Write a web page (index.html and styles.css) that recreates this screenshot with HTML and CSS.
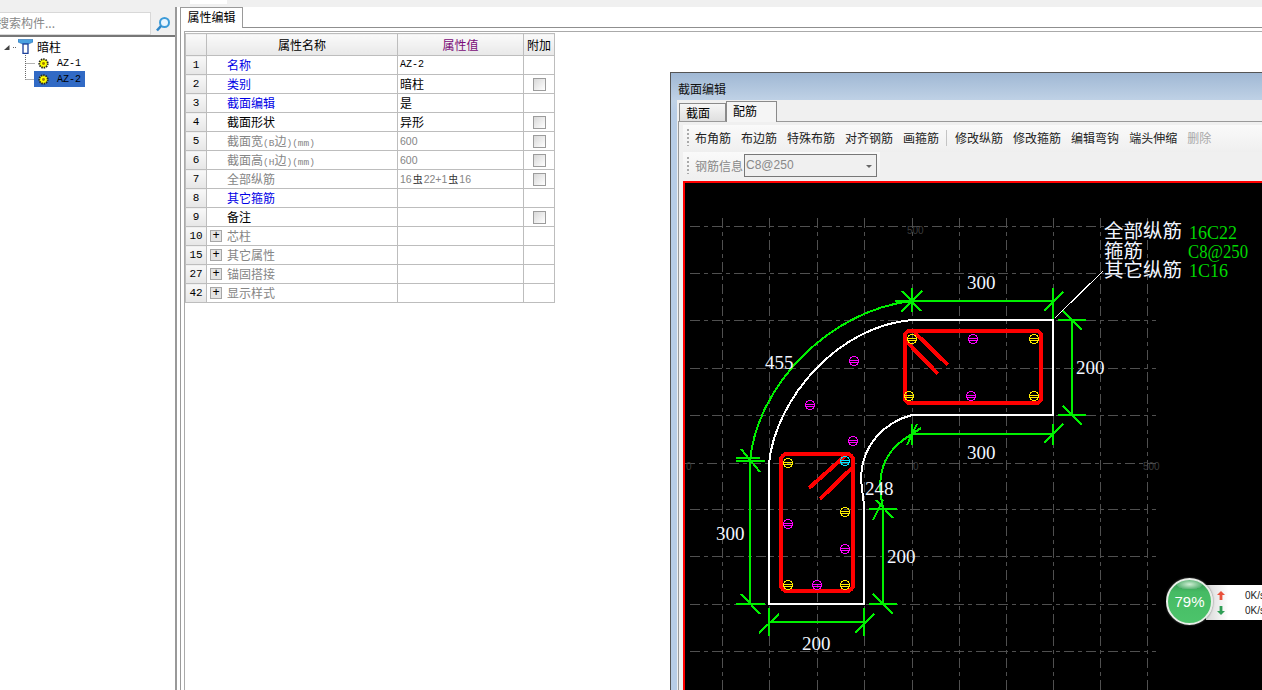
FILE: index.html
```html
<!DOCTYPE html>
<html lang="zh">
<head>
<meta charset="utf-8">
<title>属性编辑</title>
<link rel="stylesheet" href="styles.css">
</head>
<body>
<div class="topstrip"><span class="topwhite"></span></div>
<div class="main">
  <aside class="left">
    <div class="searchrow">
      <div class="searchbox">搜索构件...</div>
      <svg class="searchicon" width="16" height="16" viewBox="0 0 16 16"><circle cx="9.5" cy="6.5" r="4.5" fill="#eaf6ff" stroke="#3d9bd8" stroke-width="2"/><path d="M6 10 L2 14.5" stroke="#2f86c8" stroke-width="2.6"/></svg>
    </div>
    <div class="tree">
      <svg class="treelines" width="60" height="50" viewBox="0 0 60 50"><path d="M4 13 L9.5 13 L9.5 8 Z" fill="#444"/><path d="M13 10.5 H17 M25.5 18 V42.5 M25.5 26.5 H35 M25.5 42.5 H35" stroke="#666" stroke-dasharray="1 1" fill="none"/></svg>
      <div class="node root">
        <svg width="15" height="15" viewBox="0 0 15 15"><path d="M0 .5 H15 V3 L10.5 5 H4.5 L0 3 Z" fill="#4aa0e0" stroke="#2a6fb0" stroke-width=".6"/><rect x="5" y="5" width="5" height="9.4" fill="#fff" stroke="#1c3f9a" stroke-width="1.3"/></svg>
        <span>暗柱</span>
      </div>
      <div class="node leaf">
        <svg class="gear" width="11" height="11" viewBox="0 0 12 12"><circle cx="6" cy="6" r="4.6" fill="#ff0" stroke="#222" stroke-width="2" stroke-dasharray="1.6 1"/><circle cx="6" cy="6" r="1.6" fill="#a07c00"/></svg>
        <span class="mono">AZ-1</span>
      </div>
      <div class="node leaf sel">
        <svg class="gear" width="11" height="11" viewBox="0 0 12 12"><circle cx="6" cy="6" r="4.6" fill="#ff0" stroke="#222" stroke-width="2" stroke-dasharray="1.6 1"/><circle cx="6" cy="6" r="1.6" fill="#a07c00"/></svg>
        <span class="mono">AZ-2</span>
      </div>
    </div>
  </aside>
  <section class="right">
    <div class="tabbar"><div class="tab">属性编辑</div></div>
    <div class="tabpage">
      <div class="inner">
      <table class="props">
        <colgroup><col class="c0"><col class="c1"><col class="c2"><col class="c3"></colgroup>
        <tr class="head"><th></th><th>属性名称</th><th class="hot">属性值</th><th>附加</th></tr>
        <tr><td class="n">1</td><td class="name blue">名称</td><td class="val mono">AZ-2</td><td></td></tr>
        <tr><td class="n">2</td><td class="name blue">类别</td><td class="val">暗柱</td><td class="chk"><i></i></td></tr>
        <tr><td class="n">3</td><td class="name blue">截面编辑</td><td class="val">是</td><td></td></tr>
        <tr><td class="n">4</td><td class="name">截面形状</td><td class="val">异形</td><td class="chk"><i></i></td></tr>
        <tr><td class="n">5</td><td class="name gray">截面宽<span class="lat">(B</span>边<span class="lat">)(mm)</span></td><td class="val gray small">600</td><td class="chk"><i></i></td></tr>
        <tr><td class="n">6</td><td class="name gray">截面高<span class="lat">(H</span>边<span class="lat">)(mm)</span></td><td class="val gray small">600</td><td class="chk"><i></i></td></tr>
        <tr><td class="n">7</td><td class="name gray">全部纵筋</td><td class="val gray small">16<b>虫</b>22+1<b>虫</b>16</td><td class="chk"><i></i></td></tr>
        <tr><td class="n">8</td><td class="name blue">其它箍筋</td><td></td><td></td></tr>
        <tr><td class="n">9</td><td class="name">备注</td><td></td><td class="chk"><i></i></td></tr>
        <tr><td class="n">10</td><td class="group"><i>+</i>芯柱</td><td></td><td></td></tr>
        <tr><td class="n">15</td><td class="group"><i>+</i>其它属性</td><td></td><td></td></tr>
        <tr><td class="n">27</td><td class="group"><i>+</i>锚固搭接</td><td></td><td></td></tr>
        <tr><td class="n">42</td><td class="group"><i>+</i>显示样式</td><td></td><td></td></tr>
      </table>
      </div>
    </div>
  </section>
</div>

<div class="dialog">
  <div class="dtitle">截面编辑</div>
  <div class="dbody">
    <div class="dtabs"><div class="dtab">截面</div><div class="dtab on">配筋</div></div>
    <div class="dpage">
      <div class="toolbar">
        <span class="grip"></span>
        <span class="tb">布角筋</span><span class="tb">布边筋</span><span class="tb">特殊布筋</span><span class="tb">对齐钢筋</span><span class="tb">画箍筋</span>
        <span class="sep"></span>
        <span class="tb">修改纵筋</span><span class="tb">修改箍筋</span><span class="tb">编辑弯钩</span><span class="tb">端头伸缩</span><span class="tb off">删除</span>
      </div>
      <div class="toolbar two">
        <span class="grip"></span>
        <span class="lbl">钢筋信息</span>
        <span class="combo">C8@250<em></em></span>
      </div>
      <div class="canvas">
        <svg class="cad" width="577" height="507" viewBox="685 183 577 507">
          <defs>
            <symbol id="bar" viewBox="-5 -5 10 10" width="10" height="10" overflow="visible">
              <circle r="4.5" fill="none" stroke="currentColor" stroke-width="1.1"/>
              <path d="M-4 -1 H4 M-4 1 H4" stroke="currentColor" stroke-width="1"/>
            </symbol>
          </defs>
          <g class="grid">
            <path d="M722 218 V691 M769.5 218 V691 M817 218 V691 M864.5 218 V691 M912 218 V691 M959 218 V691 M1006 218 V691 M1053 218 V691 M1100 218 V691 M1147 218 V691"/>
            <path d="M690 226 H1156 M690 273 H1156 M690 320 H1156 M690 368 H1156 M690 415 H1156 M685 463 H1156 M690 509 H1156 M690 556 H1156 M690 604 H1156 M690 651 H1156"/>
          </g>
          <g class="axis">
            <text x="907" y="234">500</text><text x="686" y="470">0</text><text x="913" y="470">0</text><text x="1143" y="470">500</text>
          </g>

          <g class="outline">
            <path d="M912 320 H1053 V415 H912 C885 422 861 445 861 480 L864 505 V604 H769 V463 C776 398 838 326 912 320 Z"/>
          </g>

          <g class="dim">
            <path d="M750 461 C757 385 830 310 912 301"/>
            <path d="M883 507 C876 480 880 450 915 433"/>
            <path d="M912 301 H1053 M1053 288 V319 M1044 311 L1063 292 M912 288 V312 M901 312 L922 291 M902 291 L921 311 M895 301 H922"/>
            <path d="M1072 320 V415 M1058 320 H1086 M1063 311 L1082 330 M1058 415 H1086 M1063 406 L1082 425"/>
            <path d="M912 434 H1053 M1053 424 V445 M1044 443 L1063 424 M912 424 V445 M907 445 L917 424 M903 440 L921 428"/>
            <path d="M750 461 V604 M736 461 H765 M741 449 L760 472 M736 604 H765 M741 594 L760 614 M736 458 H760"/>
            <path d="M769 622 H864 M769 608 V636 M759 633 L779 614 M864 608 V636 M855 633 L874 614"/>
            <path d="M883 509 V604 M869 509 H897 M876 500 L893 518 M873 520 L883 500 M869 604 H897 M873 594 L893 614"/>
          </g>

          <g class="stir">
            <rect x="905" y="331" width="136" height="72" rx="5"/>
            <path d="M915 333 L948 365 M907 342 L938 374"/>
            <rect x="781" y="454" width="72" height="137" rx="6"/>
            <path d="M809 488 L845 456 M820 499 L852 468"/>
          </g>

          <use href="#bar" class="y" x="907" y="334"/>
          <use href="#bar" class="y" x="1029" y="334"/>
          <use href="#bar" class="y" x="904" y="391"/>
          <use href="#bar" class="y" x="1029" y="391"/>
          <use href="#bar" class="m" x="968" y="334"/>
          <use href="#bar" class="m" x="966" y="391"/>
          <use href="#bar" class="m" x="849" y="356"/>
          <use href="#bar" class="m" x="805" y="400"/>
          <use href="#bar" class="m" x="848" y="436"/>
          <use href="#bar" class="y" x="783" y="458"/>
          <use href="#bar" class="c" x="840" y="456"/>
          <use href="#bar" class="y" x="840" y="507"/>
          <use href="#bar" class="m" x="783" y="519"/>
          <use href="#bar" class="m" x="840" y="544"/>
          <use href="#bar" class="y" x="783" y="580"/>
          <use href="#bar" class="m" x="812" y="580"/>
          <use href="#bar" class="y" x="840" y="580"/>

          <path class="leader" d="M1055 318 L1103 271"/>
          <g class="cadtext">
            <text x="1104" y="238">全部纵筋</text>
            <text x="1104" y="258">箍筋</text>
            <text x="1104" y="277">其它纵筋</text>
          </g>
          <g class="cadnum">
            <text x="967" y="289">300</text>
            <text x="1076" y="374">200</text>
            <text x="967" y="459">300</text>
            <text x="765" y="369">455</text>
            <text x="865" y="495">248</text>
            <text x="716" y="540">300</text>
            <text x="887" y="563">200</text>
            <text x="802" y="650">200</text>
          </g>
          <g class="cadgreen">
            <text x="1189" y="239" textLength="48" lengthAdjust="spacingAndGlyphs">16C22</text>
            <text x="1188" y="258" textLength="60" lengthAdjust="spacingAndGlyphs">C8@250</text>
            <text x="1189" y="277" textLength="39" lengthAdjust="spacingAndGlyphs">1C16</text>
          </g>
        </svg>
      </div>
    </div>
  </div>
</div>

<div class="speed">
  <div class="panel">
    <div class="rate"><svg width="8" height="9" viewBox="0 0 8 9"><path d="M4 0 L8 4 H5.4 V9 H2.6 V4 H0 Z" fill="#e8503a"/></svg><span>0K/s</span></div>
    <div class="rate"><svg width="8" height="9" viewBox="0 0 8 9"><path d="M4 9 L8 5 H5.4 V0 H2.6 V5 H0 Z" fill="#2f9e55"/></svg><span>0K/s</span></div>
  </div>
  <div class="ball">79%</div>
</div>
</body>
</html>
```
FILE: styles.css
```css
* { box-sizing: border-box; }
html, body { margin: 0; height: 690px; overflow: hidden; }
body { background: #fff; font-family: "Noto Sans CJK SC", "Liberation Sans", sans-serif; font-size: 12px; color: #000; position: relative; }
.topstrip { height: 7px; background: #f0f0f0; }
.topwhite { display: block; width: 37px; height: 4px; margin-left: 190px; background: #fff; }
.main { display: flex; height: 683px; }
.left { width: 177px; border-right: 2px solid #999; flex: none; display: flex; flex-direction: column; background: #fff; }
.searchrow { height: 30px; display: flex; align-items: flex-end; background: #f0f0f0; border-bottom: 2px solid #777; flex: none; }
.searchbox { width: 152px; height: 23px; margin-left: -1px; background: #fff; border: 1px solid #d8d8d8; color: #888; font-size: 12px; line-height: 20px; overflow: hidden; text-indent: -3px; white-space: nowrap; }
.searchicon { margin: 0 0 3px 4px; }
.tree { position: relative; padding: 0 0 0 18px; flex: 1; }
.treelines { position: absolute; left: 0; top: 0; }
.node { height: 16px; display: flex; align-items: center; gap: 4px; position: relative; }
.root { height: 18px; font-size: 12px; }
.leaf { margin-left: 16px; width: 51px; padding-left: 4px; gap: 8px; }
.leaf.sel { background: #316ac5; }
.mono { font-family: "Liberation Mono", monospace; font-size: 10px; }
.gear { flex: none; }
.right { flex: 1; display: flex; flex-direction: column; min-width: 0; padding-left: 3px; background: #fff; }
.tabbar { height: 20px; display: flex; flex: none; }
.tab { width: 63px; height: 21px; background: #fff; border: 1px solid #9a9a9a; border-bottom: 0; text-align: center; line-height: 18px; font-size: 12px; position: relative; z-index: 1; }
.tabpage { flex: 1; border-top: 1px solid #8f8f8f; border-left: 1px solid #9a9a9a; padding: 3px 0 0 3px; display: flex; min-height: 0; }
.inner { flex: 1; border-top: 1px solid #aaa; border-left: 1px solid #aaa; padding-top: 1px; }
.props { border-collapse: collapse; table-layout: fixed; width: 369px; }
.c0 { width: 21px; } .c1 { width: 191px; } .c2 { width: 126px; } .c3 { width: 31px; }
.props th, .props td { border: 1px solid #bdbdbd; padding: 0; height: 19px; font-weight: 400; font-size: 12px; line-height: 16px; white-space: nowrap; overflow: hidden; }
.props tr.head th { height: 22px; background: linear-gradient(#fafafa, #e8e8e8); }
.props th.hot { background: linear-gradient(#fbdfa2, #f3c063); color: #7a0a78; }
.props td.n { background: linear-gradient(#f8f8f8, #e6e6e6); text-align: center; font-family: "Liberation Mono", monospace; font-size: 11px; }
.props td.mono { font-size: 10px; }
.props td.name { padding-left: 20px; }
.blue { color: #0000e6; }
.gray { color: #858585; }
.lat { font-family: "Liberation Mono", monospace; font-size: 9.5px; line-height: 1; }
.props td.val { padding-left: 2px; }
.props td.small { font-family: "Liberation Sans", sans-serif; font-size: 10.5px; }
.small b { font-family: "Noto Sans CJK SC", sans-serif; font-weight: 400; color: #333; font-size: 10px; line-height: 1; padding: 0 1px; }
.chk { text-align: center; }
.chk i { display: block; width: 13px; height: 13px; margin: 0 auto; border: 1px solid #9c9c9c; background: linear-gradient(135deg, #d8d8d8, #fff); }
.props td.group { color: #858585; }
.group i { display: inline-block; width: 12px; height: 12px; margin: 2px 5px 0 3px; border: 1px solid #a6a6a6; background: #e4e4e4; color: #000; font-style: normal; font-family: "Liberation Mono", monospace; font-size: 12px; line-height: 10px; text-align: center; vertical-align: top; }

.dialog { position: absolute; left: 670px; top: 72px; width: 592px; height: 618px; border: 1px solid #555; border-right: 0; border-bottom: 0; background: linear-gradient(180deg, #a0b8d4 0, #c0d2e6 28px, #b8cde6 40px); display: flex; flex-direction: column; }
.dtitle { height: 27px; padding: 6px 0 0 7px; line-height: 19px; font-size: 12px; color: #111; flex: none; }
.dbody { flex: 1; margin-left: 6px; display: flex; flex-direction: column; background: #f0f0f0; min-height: 0; }
.dtabs { height: 21px; display: flex; padding-left: 2px; align-items: flex-end; flex: none; }
.dtab { width: 47px; height: 18px; border: 1px solid #8a8a8a; border-bottom: 0; background: linear-gradient(#f6f6f6, #dfdfdf); line-height: 18px; padding-left: 6px; font-size: 12px; }
.dtab.on { width: 51px; height: 21px; background: #f5f5f5; margin-bottom: -1px; position: relative; line-height: 17px; }
.dpage { flex: 1; min-height: 0; border-top: 1px solid #9a9a9a; border-left: 1px solid #9a9a9a; margin-left: 1px; padding: 3px 0 0 4px; display: flex; flex-direction: column; }
.toolbar { height: 27px; display: flex; align-items: center; flex: none; background: linear-gradient(#fafafa, #efefef); padding: 0 0 2px 2px; white-space: nowrap; }
.toolbar.two { width: 197px; padding-bottom: 0; }
.grip { width: 2px; height: 17px; margin: 0 6px 0 2px; background: repeating-linear-gradient(#aaa 0 2px, transparent 2px 4px); flex: none; }
.tb { margin-right: 10px; line-height: 16px; color: #222; font-size: 12px; flex: none; }
.tb.off { color: #a8a8a8; }
.sep { width: 1px; height: 16px; background: #c4c4c4; margin: 0 8px 0 -3px; flex: none; }
.lbl { color: #888; flex: none; }
.combo { flex: none; width: 133px; height: 23px; margin-left: 1px; border: 1px solid #777; color: #888; line-height: 21px; padding-left: 1px; font-family: "Liberation Sans", sans-serif; font-size: 12px; background: #f0f0f0; position: relative; }
.combo em { position: absolute; right: 4px; top: 10px; border: 3px solid transparent; border-top-color: #666; }
.canvas { flex: 1; min-height: 0; margin-top: 2px; border: 2px solid #ff0000; border-right: 0; border-bottom: 0; background: #000; overflow: hidden; }
.cad { display: block; background: #000; }
.grid path { stroke: #505050; stroke-dasharray: 10 4 4 4; fill: none; stroke-width: 1; shape-rendering: crispEdges; }
.axis text { fill: #3c3c3c; font-family: "Liberation Sans", sans-serif; font-size: 10px; }
.outline path { fill: none; stroke: #fff; stroke-width: 2; shape-rendering: crispEdges; }
.dim path { fill: none; stroke: #00f000; stroke-width: 2; shape-rendering: crispEdges; }
.stir rect, .stir path { fill: none; stroke: #ff0000; stroke-width: 4; shape-rendering: crispEdges; }
.y { color: #ffee00; shape-rendering: crispEdges; } .m { color: #ff00ff; shape-rendering: crispEdges; } .c { color: #00e5ff; shape-rendering: crispEdges; }
.leader { stroke: #fff; stroke-width: 1; fill: none; shape-rendering: crispEdges; }
.cadtext text { fill: #f2f6ff; font-family: "Noto Sans CJK SC", sans-serif; font-size: 19.5px; }
.cadnum text { fill: #f2f6ff; font-family: "Liberation Serif", serif; font-size: 19px; }
.cadgreen text { fill: #00d800; font-family: "Liberation Serif", serif; font-size: 19px; }

.speed { position: absolute; left: 1166px; top: 577px; width: 96px; height: 49px; overflow: hidden; }
.ball { position: absolute; left: 0; top: 1px; width: 47px; height: 47px; border-radius: 50%; border: 2px solid #e8eee8; box-shadow: 0 0 2px #666; background: radial-gradient(ellipse 30% 12% at 50% 10%, #cfeed4 0, #55b070 100%, transparent 100%), linear-gradient(#2e8f4d 0, #46bb64 28%, #4cc46b 100%); color: #fff; text-align: center; line-height: 44px; font-family: "Liberation Sans", sans-serif; font-size: 15px; }
.panel { position: absolute; left: 40px; top: 8px; width: 56px; height: 35px; background: linear-gradient(90deg, #d8d8d8, #fff 40%); padding: 3px 0 0 11px; }
.rate { height: 15px; display: flex; align-items: center; gap: 20px; font-family: "Liberation Sans", sans-serif; font-size: 10px; color: #222; white-space: nowrap; }
.rate svg { flex: none; }
```
